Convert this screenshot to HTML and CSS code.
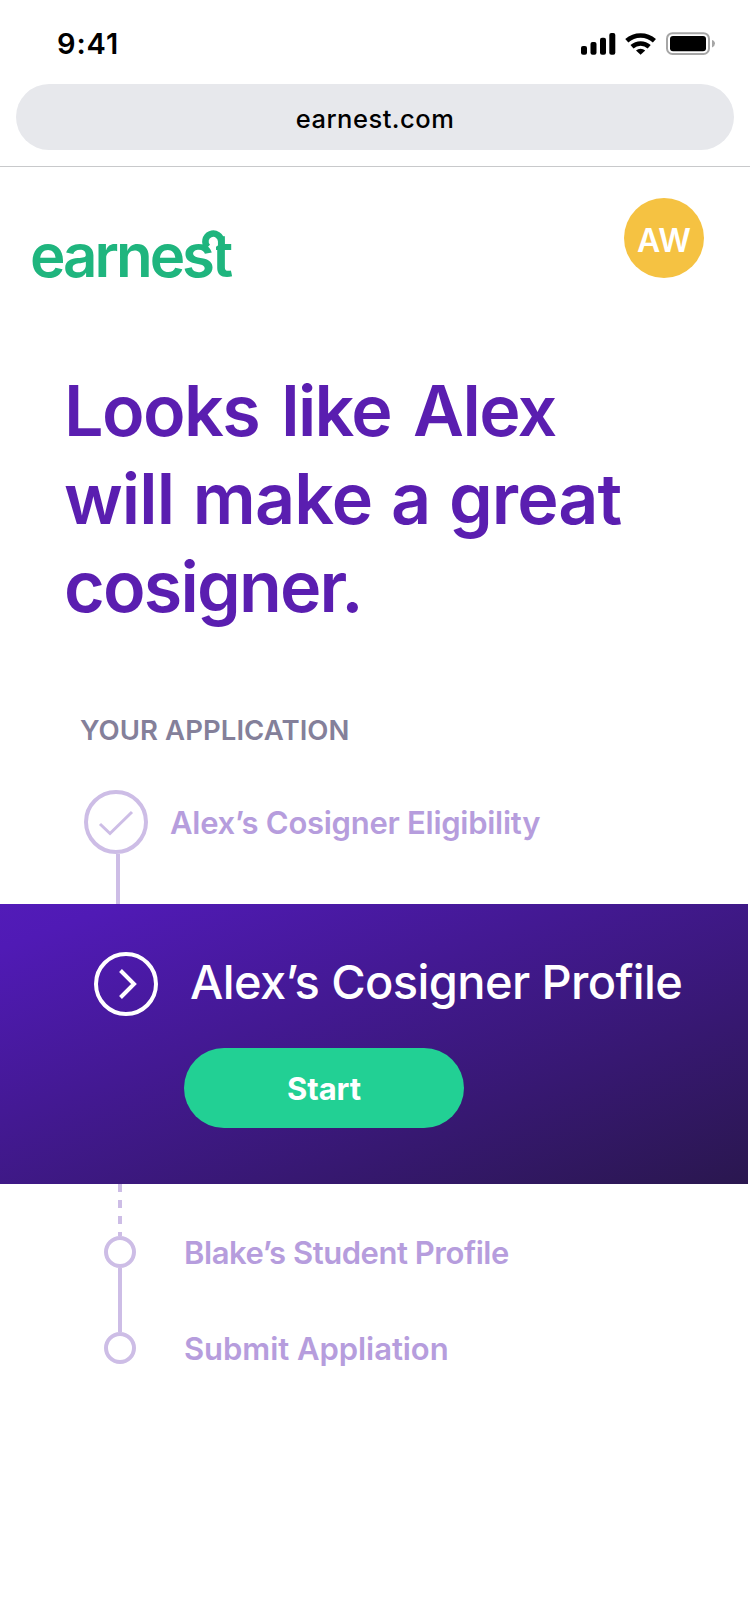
FILE: index.html
```html
<!DOCTYPE html>
<html lang="en">
<head>
<meta charset="utf-8">
<title>Earnest</title>
<link rel="stylesheet" href="styles.css">
</head>
<body>
<div class="status">
  <span class="time">9:41</span>
  <svg class="status-icons" width="136" height="24" viewBox="0 0 136 24">
    <rect x="0" y="14" width="6" height="8.7" rx="2"/>
    <rect x="9.5" y="10" width="6" height="12.7" rx="2"/>
    <rect x="19" y="5.700" width="6" height="17" rx="2"/>
    <rect x="28.300" y="1" width="6" height="21.700" rx="2"/>
    <g fill="none" stroke="#000" stroke-width="4.600">
      <path d="M45.800 8.800 A20.500 20.500 0 0 1 73.400 8.800"/>
      <path d="M51 14.800 A13 13 0 0 1 68.200 14.800"/>
    </g>
    <path d="M59.600 22.700 L55 18.600 A6.600 6.600 0 0 1 64.200 18.600 Z"/>
    <rect x="86" y="1.200" width="42" height="20.800" rx="5.500" fill="none" stroke="#a6a6a6" stroke-width="2"/>
    <rect x="89" y="4" width="36" height="15.300" rx="3"/>
    <path d="M131 8 Q134 9 134 11.600 Q134 14.200 131 15.400 Z" fill="#a6a6a6"/>
  </svg>
</div>
<div class="address"><span class="url">earnest.com</span></div>
<header class="nav">
  <div class="logo">earnest<svg class="logo-loop" width="40" height="32" viewBox="0 0 40 32"><circle cx="17.300" cy="15.500" r="6" fill="#fff"/><path d="M15 20 H20 V27 L15 23 Z" fill="#fff"/><path d="M11.700 21.100 A7.900 7.900 0 1 1 25.200 15.500 V24" fill="none" stroke="#1fb57e" stroke-width="6.500"/></svg></div>
  <div class="avatar">AW</div>
</header>
<h1 class="headline">
  <span class="line line-a">Looks like Alex</span>
  <span class="line line-b">will make a great</span>
  <span class="line line-c">cosigner.</span>
</h1>
<h2 class="label">YOUR APPLICATION</h2>
<div class="step step-done">
  <svg width="64" height="64" viewBox="0 0 64 64" fill="none" stroke="#cdbde6">
    <circle cx="32" cy="32" r="30" stroke-width="4"/>
    <path d="M16 34 L26 43.500 L48 22" stroke-width="3"/>
  </svg>
  <span class="step-name name-a">Alex’s Cosigner Eligibility</span>
</div>
<div class="link link-first"></div>
<section class="current">
  <div class="current-head">
    <svg width="64" height="64" viewBox="0 0 64 64" fill="none" stroke="#fff" stroke-width="4">
      <circle cx="32" cy="32" r="30"/>
      <path d="M26.500 18.500 L40 32 L26.500 45.500"/>
    </svg>
    <span class="current-name">Alex’s Cosigner Profile</span>
  </div>
  <button class="start">Start</button>
</section>
<div class="link link-dashed"></div>
<div class="step step-todo"><i class="dot"></i><span class="step-name name-b">Blake’s Student Profile</span></div>
<div class="link link-last"></div>
<div class="step step-todo"><i class="dot"></i><span class="step-name name-c">Submit Appliation</span></div>
</body>
</html>
```
FILE: styles.css
```css
* { box-sizing: border-box; }
body { margin: 0; min-height: 1624px; background: #fff; font-family: Inter, "Liberation Sans", sans-serif; white-space: nowrap; }

.status { display: flex; justify-content: space-between; align-items: flex-start; height: 84px; padding: 0 33px 0 57px; }
.time { font-size: 29px; font-weight: 600; line-height: 87px; letter-spacing: .9px; }
.status-icons { margin-top: 32px; }

.address { height: 66px; margin: 0 16px; border-radius: 33px; background: #e7e8ec; text-align: center; }
.url { font-size: 25.5px; font-weight: 500; line-height: 69px; letter-spacing: .5px; }

.nav { display: flex; justify-content: space-between; align-items: flex-start; height: 183px; margin-top: 16px; padding: 31px 46px 0 30px; border-top: 1px solid #c8c9cb; }
.logo { position: relative; margin-top: 24px; color: #1fb57e; font-size: 60px; font-weight: 600; line-height: 66px; letter-spacing: -3px; }
.logo-loop { position: absolute; left: 166px; top: 4px; }
.avatar { width: 80px; height: 80px; border-radius: 50%; background: #f5c242; color: #fff; font-size: 32px; font-weight: 600; line-height: 85px; text-align: center; }

.headline { margin: 18px 0 0 64px; color: #5a1eb0; font-size: 70px; font-weight: 600; line-height: 88px; }
.line { display: block; }
.line-a { letter-spacing: -1.6px; word-spacing: 6px; }
.line-b { letter-spacing: -.9px; word-spacing: 2px; }
.line-c { letter-spacing: -1.8px; }

.label { margin: 79px 0 0 80px; color: #84809a; font-size: 27.5px; font-weight: 600; line-height: 40px; letter-spacing: .07px; }

.step { display: flex; align-items: center; }
.step-done { height: 64px; margin-top: 40px; padding-left: 84px; gap: 22px; }
.step-todo { height: 32px; padding-left: 104px; gap: 48px; }
.step-name { padding-top: 1px; color: #b69ddd; font-size: 31px; font-weight: 600; line-height: 38px; }
.name-a { letter-spacing: -.27px; }
.name-b { letter-spacing: -.46px; }
.name-c { letter-spacing: -.05px; }
.dot { width: 32px; height: 32px; border: 4px solid #cdbde6; border-radius: 50%; }

.link { width: 4px; margin-left: 118px; background: #cdbde6; }
.link-first { height: 50px; margin-left: 116px; }
.link-dashed { height: 52px; background: repeating-linear-gradient(#cdbde6 0 8px, transparent 8px 16px); }
.link-last { height: 64px; }

.current { width: 748px; height: 280px; padding: 48px 0 0 94px; background: linear-gradient(to bottom right, #521bb8, #501ab5 8%, #2a174f); }
.current-head { display: flex; gap: 32px; height: 64px; }
.current-name { color: #fff; font-size: 47px; font-weight: 500; line-height: 59px; letter-spacing: -.6px; }
.start { display: block; width: 280px; height: 80px; margin: 32px 0 0 90px; padding: 1px 0 0; border: 0; border-radius: 40px; background: #22d094; color: #fff; font: 700 31px/38px Inter, "Liberation Sans", sans-serif; letter-spacing: -.1px; }
```
